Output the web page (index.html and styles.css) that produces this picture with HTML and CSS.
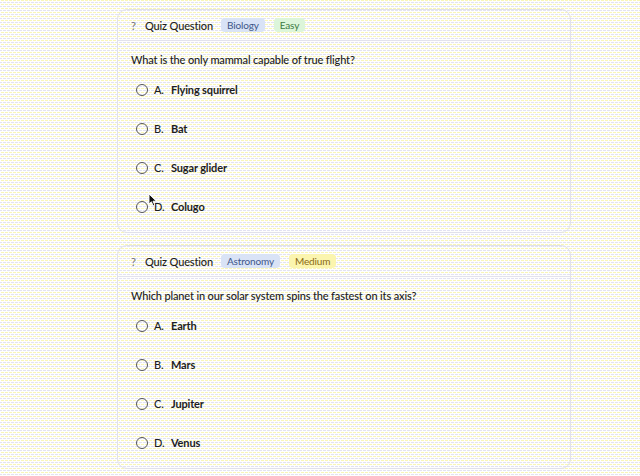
FILE: index.html
```html
<!DOCTYPE html>
<html lang="en">
<head>
    <meta charset="UTF-8">
    <meta name="viewport" content="width=device-width, initial-scale=1.0">
    <title>Quiz Questions</title>
    <link rel="stylesheet" href="styles.css">
</head>
<body>
    <div class="page">
        <div class="card">
            <div class="card-header">
                <span class="qmark">?</span>
                <span class="card-title">Quiz Question</span>
                <span class="badge badge-blue">Biology</span>
                <span class="badge badge-green">Easy</span>
            </div>
            <div class="card-body">
                <p class="question">What is the only mammal capable of true flight?</p>
                <ul class="options">
                    <li class="option"><span class="radio"></span><span class="letter">A.</span><span class="answer">Flying squirrel</span></li>
                    <li class="option"><span class="radio"></span><span class="letter">B.</span><span class="answer">Bat</span></li>
                    <li class="option"><span class="radio"></span><span class="letter">C.</span><span class="answer">Sugar glider</span></li>
                    <li class="option"><span class="radio"></span><span class="letter">D.</span><span class="answer">Colugo</span></li>
                </ul>
            </div>
        </div>

        <div class="card">
            <div class="card-header">
                <span class="qmark">?</span>
                <span class="card-title">Quiz Question</span>
                <span class="badge badge-blue">Astronomy</span>
                <span class="badge badge-yellow">Medium</span>
            </div>
            <div class="card-body">
                <p class="question">Which planet in our solar system spins the fastest on its axis?</p>
                <ul class="options">
                    <li class="option"><span class="radio"></span><span class="letter">A.</span><span class="answer">Earth</span></li>
                    <li class="option"><span class="radio"></span><span class="letter">B.</span><span class="answer">Mars</span></li>
                    <li class="option"><span class="radio"></span><span class="letter">C.</span><span class="answer">Jupiter</span></li>
                    <li class="option"><span class="radio"></span><span class="letter">D.</span><span class="answer">Venus</span></li>
                </ul>
            </div>
        </div>

        <!-- mouse pointer captured in the recording -->
        <svg class="cursor" width="10" height="14" viewBox="0 0 10 14">
            <path d="M1 1 L1 11 L3.4 8.8 L5.2 12.8 L6.8 12.1 L5 8.2 L8.4 8.2 Z" fill="#111" stroke="#fff" stroke-width="0.9" stroke-linejoin="round"/>
        </svg>
    </div>
</body>
</html>
```

FILE: styles.css
```css
html, body {
    margin: 0;
    height: 100%;
}
body {
    font-family: Lato, "Liberation Sans", sans-serif;
    color: #1d1d22;
    letter-spacing: -0.15px;
    background-color: #fefefe;
    background-image:
        conic-gradient(from 90deg at 1px 1px, transparent 75%, #f9f6b6 0),
        conic-gradient(from 90deg at 1px 1px, transparent 75%, #e2e2f2 0);
    background-size: 4px 4px, 4px 4px;
    background-position: 0 0, 2px 2px;
}
.page {
    position: relative;
    width: 454px;
    margin-left: 117px;
    padding-top: 9px;
    display: flex;
    flex-direction: column;
    gap: 12px;
}
.card {
    border: 1px solid #e1e1ea;
    border-radius: 10px;
}
.card-header {
    height: 30px;
    display: flex;
    align-items: center;
    padding: 0 13px;
    border-bottom: 1px solid #e3e3ec;
    font-size: 11px;
}
.qmark {
    color: #707078;
    width: 14px;
}
.card-title {
    font-weight: 500;
    margin-right: 8px;
}
.badge {
    font-size: 10px;
    line-height: 14px;
    padding: 0 6px;
    border-radius: 4px;
    margin-right: 9px;
}
.badge-blue {
    background: #d9e3f6;
    color: #3d5688;
}
.badge-green {
    background: #dcf5da;
    color: #3b7a42;
}
.badge-yellow {
    background: #fbf5ae;
    color: #8a6a12;
}
.card-body {
    padding: 11px 13px 6px;
}
.question {
    margin: 0;
    font-size: 11px;
    line-height: 16px;
    font-weight: 500;
}
.options {
    list-style: none;
    margin: 2px 0 0;
    padding: 0;
}
.option {
    height: 39px;
    display: flex;
    align-items: center;
    padding-left: 5px;
    font-size: 11px;
}
.radio {
    width: 10px;
    height: 10px;
    border: 1.5px solid #55555c;
    border-radius: 50%;
    margin-right: 6px;
}
.letter {
    width: 17px;
    font-weight: 500;
}
.answer {
    font-weight: 700;
}
.cursor {
    position: absolute;
    left: 31px;
    top: 193px;
}
```
